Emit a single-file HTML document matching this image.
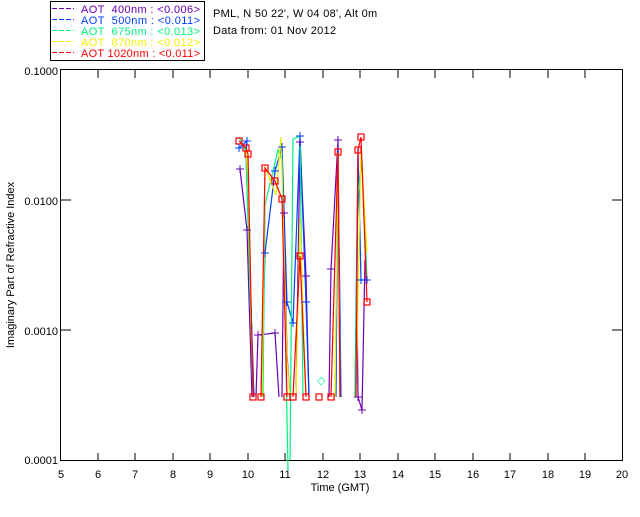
<!DOCTYPE html>
<html><head><style>
body{margin:0;background:#fff;width:640px;height:512px;overflow:hidden}
svg text{font-family:"Liberation Sans",sans-serif;font-size:11px}
</style></head><body>
<svg width="640" height="512" xmlns="http://www.w3.org/2000/svg">
<rect x="50.5" y="1.5" width="154" height="59" fill="none" stroke="#000" stroke-width="1"/>
<g stroke-width="1" stroke-dasharray="5,2">
<path d="M52 8.5h22" stroke="#6a00b0"/><path d="M52 19.5h22" stroke="#0040ff"/><path d="M52 30.5h22" stroke="#00f080"/><path d="M52 41.5h22" stroke="#f0f000"/><path d="M52 52.5h22" stroke="#ff0000"/>
</g>
<g font-size="11.5">
<text x="81" y="13" fill="#6a00b0" textLength="119" lengthAdjust="spacing">AOT &#160;400nm : &lt;0.006&gt;</text>
<text x="81" y="24" fill="#0040ff" textLength="119" lengthAdjust="spacing">AOT &#160;500nm : &lt;0.011&gt;</text>
<text x="81" y="35" fill="#00f080" textLength="119" lengthAdjust="spacing">AOT &#160;675nm : &lt;0.013&gt;</text>
<text x="81" y="46" fill="#f0f000" textLength="119" lengthAdjust="spacing">AOT &#160;870nm : &lt;0.012&gt;</text>
<text x="81" y="57" fill="#ff0000" textLength="119" lengthAdjust="spacing">AOT 1020nm : &lt;0.011&gt;</text>
</g>
<text x="213" y="17" letter-spacing="0.3">PML, N 50 22', W 04 08', Alt 0m</text>
<text x="213" y="34" letter-spacing="0.3">Data from: 01 Nov 2012</text>
<g stroke="#000" stroke-width="1" fill="none">
<rect x="60.5" y="69.5" width="562" height="391"/>
<path d="M98 70v8M135 70v8M173 70v8M210 70v8M248 70v8M285 70v8M323 70v8M360 70v8M398 70v8M435 70v8M473 70v8M510 70v8M548 70v8M585 70v8"/>
<path d="M98 461v-8M135 461v-8M173 461v-8M210 461v-8M248 461v-8M285 461v-8M323 461v-8M360 461v-8M398 461v-8M435 461v-8M473 461v-8M510 461v-8M548 461v-8M585 461v-8"/>
<path d="M61 200h10M61 330h10M622 200h-10M622 330h-10"/>
</g>
<g text-anchor="end">
<text x="58" y="75">0.1000</text><text x="58" y="205">0.0100</text><text x="58" y="335">0.0010</text><text x="58" y="464">0.0001</text>
</g>
<g text-anchor="middle">
<text x="61" y="478">5</text><text x="98" y="478">6</text><text x="135" y="478">7</text><text x="173" y="478">8</text><text x="210" y="478">9</text><text x="248" y="478">10</text><text x="285" y="478">11</text><text x="323" y="478">12</text><text x="360" y="478">13</text><text x="398" y="478">14</text><text x="435" y="478">15</text><text x="473" y="478">16</text><text x="510" y="478">17</text><text x="548" y="478">18</text><text x="585" y="478">19</text><text x="622" y="478">20</text>
<text x="340" y="491">Time (GMT)</text>
<text transform="translate(14,265) rotate(-90)">Imaginary Part of Refractive Index</text>
</g>
<g fill="none" stroke-width="1.2">
<polyline stroke="#6a00b0" points="240,169 247,230 252,397"/>
<polyline stroke="#6a00b0" points="256,397 258,335 275,333 279,397"/>
<polyline stroke="#6a00b0" points="282,397 284,213 287,355 290,397"/>
<polyline stroke="#6a00b0" points="296,397 300,142 306,276 309,397"/>
<polyline stroke="#6a00b0" points="329,397 331,269 338,140 340,397"/>
<polyline stroke="#6a00b0" points="357,300 358,397 362,410 365,260"/>
<polyline stroke="#0040ff" points="239,148 247,141 246,155 254,397"/>
<polyline stroke="#0040ff" points="261,397 265,253 275,171 282,147 287,302 293,323 300,136 306,302 309,397"/>
<polyline stroke="#0040ff" points="336,397 338,149 341,397"/>
<polyline stroke="#0040ff" points="355,397 358,148 361,280 367,280"/>
<polyline stroke="#00f080" points="239,137 246,151 253,397"/>
<polyline stroke="#00f080" points="263,397 265,205 278,150 282,160 288,470"/>
<polyline stroke="#00f080" points="290,460 293,139 300,136 303,397"/>
<polyline stroke="#00f080" points="335,397 338,152 340,397"/>
<polyline stroke="#00f080" points="355,397 358,195 362,160 367,280"/>
<polyline stroke="#f0f000" points="246,150 248,175 253,397"/>
<polyline stroke="#f0f000" points="262,397 265,167 276,195 281,137 287,360 290,397"/>
<polyline stroke="#f0f000" points="296,397 300,218 306,397"/>
<polyline stroke="#f0f000" points="335,397 338,152 340,397"/>
<polyline stroke="#f0f000" points="356,397 361,148 367,252"/>
<polyline stroke="#ff0000" points="239,141 246,148 248,154 253,397"/>
<polyline stroke="#ff0000" points="261,397 265,168 275,181 282,199 287,397"/>
<polyline stroke="#ff0000" points="293,397 300,256 306,397"/>
<polyline stroke="#ff0000" points="331,397 338,152 340,397"/>
<polyline stroke="#ff0000" points="356,397 358,150 361,137 367,302"/>
</g>
<g fill="none" stroke="#ff0000" stroke-width="1.2">
<rect x="236" y="138" width="6" height="6"/><rect x="243" y="145" width="6" height="6"/><rect x="245" y="151" width="6" height="6"/>
<rect x="250" y="394" width="6" height="6"/><rect x="258" y="394" width="6" height="6"/><rect x="262" y="165" width="6" height="6"/>
<rect x="272" y="178" width="6" height="6"/><rect x="279" y="196" width="6" height="6"/><rect x="284" y="394" width="6" height="6"/>
<rect x="290" y="394" width="6" height="6"/><rect x="297" y="253" width="6" height="6"/><rect x="303" y="394" width="6" height="6"/>
<rect x="316" y="394" width="6" height="6"/><rect x="328" y="394" width="6" height="6"/><rect x="335" y="149" width="6" height="6"/>
<rect x="355" y="147" width="6" height="6"/><rect x="358" y="134" width="6" height="6"/><rect x="364" y="299" width="6" height="6"/>
</g>
<g stroke="#6a00b0" stroke-width="1">
<path d="M236 169h8M240 165v8M243 230h8M247 226v8M254 335h8M258 331v8M271 333h8M275 329v8M280 213h8M284 209v8M296 142h8M300 138v8M302 276h8M306 272v8M327 269h8M331 265v8M334 140h8M338 136v8M354 397h8M358 393v8M358 410h8M362 406v8"/>
</g>
<g stroke="#0040ff" stroke-width="1">
<path d="M235 148h8M239 144v8M243 141h8M247 137v8M261 253h8M265 249v8M271 171h8M275 167v8M278 147h8M282 143v8M283 302h8M287 298v8M289 323h8M293 319v8M296 136h8M300 132v8M302 302h8M306 298v8M357 280h8M361 276v8M363 280h8M367 276v8"/>
</g>
<text x="317" y="384" fill="#00f080" font-size="9">◇</text>
</svg>
</body></html>
